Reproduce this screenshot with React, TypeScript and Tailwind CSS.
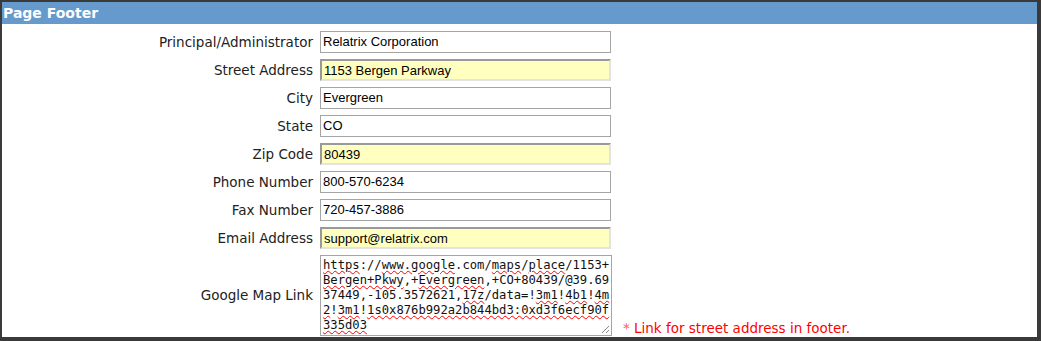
import React from "react";

const rows: { label: string; value: string; hl?: boolean }[] = [
  { label: "Principal/Administrator", value: "Relatrix Corporation" },
  { label: "Street Address", value: "1153 Bergen Parkway", hl: true },
  { label: "City", value: "Evergreen" },
  { label: "State", value: "CO" },
  { label: "Zip Code", value: "80439", hl: true },
  { label: "Phone Number", value: "800-570-6234" },
  { label: "Fax Number", value: "720-457-3886" },
  { label: "Email Address", value: "support@relatrix.com", hl: true },
];

const W = ({ children }: { children: React.ReactNode }) => (
  <span className="underline decoration-wavy decoration-[#ff0000] decoration-1 underline-offset-1">{children}</span>
);

export default function App() {
  return (
    <div className="w-[1041px] h-[341px] bg-white border-[#3a3a3a] border-t-2 border-l-2 border-r-[4px] border-b-[4px] font-['DejaVu_Sans',sans-serif] overflow-hidden">
      <div className="h-[22px] bg-[#6699cc] text-white font-bold text-[14px] leading-[22px] pl-[1px]">Page Footer</div>
      <div className="pt-[7px] flex flex-col gap-[6px]">
        {rows.map((r) => (
          <div key={r.label} className="flex items-center h-[22px]">
            <div className="w-[311px] text-right text-[13.5px] text-[#222]">{r.label}</div>
            <div
              className={
                "ml-[7px] w-[291px] h-[22px] pl-[2px] text-[13px] leading-[20px] text-black font-['Liberation_Sans',Arial,sans-serif] " +
                (r.hl
                  ? "bg-[#ffffc0] border-t-2 border-l-2 border-t-[#999] border-l-[#999] border-r-2 border-b-2 border-r-[#e3e3e3] border-b-[#e3e3e3] leading-[18px]"
                  : "bg-white border border-[#a5a5a5]")
              }
            >
              {r.value}
            </div>
          </div>
        ))}
        <div className="flex items-center h-[81px]">
          <div className="w-[311px] text-right text-[13.5px] text-[#222]">Google Map Link</div>
          <div className="relative ml-[7px] w-[292px] h-[81px] border border-[#a5a5a5] bg-white pl-[2px] pr-0 pt-[2px] font-['DejaVu_Sans_Mono',monospace] text-[12.2px] leading-[15px] text-[#111] break-all overflow-hidden">
            <W>https</W>://<W>www.google</W>.com/<W>maps</W>/<W>place</W>/1153+<W>Bergen+Pkwy</W>,+<W>Evergreen</W>,+CO+80439/@39.6937449,-105.3572621,<W>17z</W>/data=!<W>3m1</W>!<W>4b1</W>!<W>4m2</W>!<W>3m1</W>!<W>1s0x876b992a2b844bd3:0xd3f6ecf90f335d03</W>
            <svg className="absolute right-[1px] bottom-[1px]" width="9" height="9" viewBox="0 0 9 9">
              <path d="M8 1 L1 8 M8 5 L5 8" stroke="#888" strokeWidth="1" />
            </svg>
          </div>
          <div className="self-end ml-[11px] text-[13.5px] leading-[16px] text-[#ff0000]">
            <span className="text-[#ff6060]">*</span> Link for street address in footer.
          </div>
        </div>
      </div>
    </div>
  );
}
